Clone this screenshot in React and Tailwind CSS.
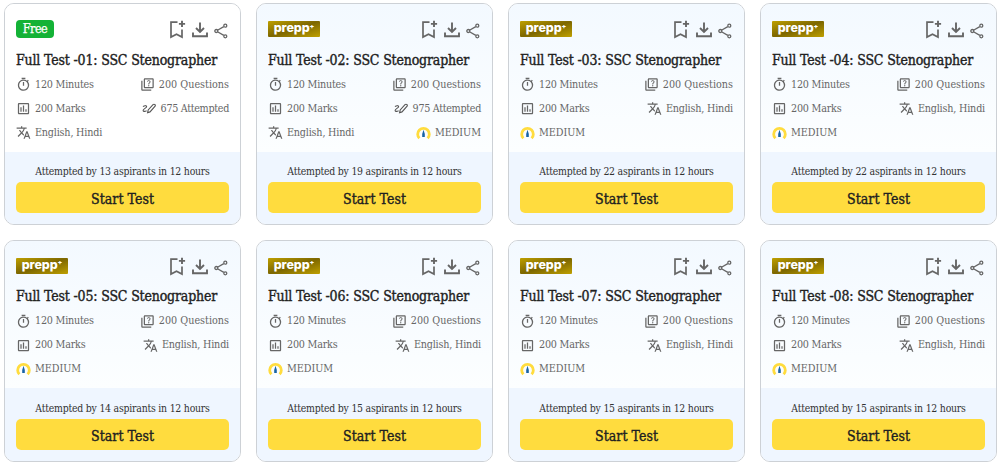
import React from 'react';
import { MdOutlineTimer, MdOutlineQuiz, MdOutlineAssessment, MdTranslate } from 'react-icons/md';

const tests = [
  { id: '01', free: true, attempted: 675, recent: 13 },
  { id: '02', attempted: 975, level: 'MEDIUM', recent: 19 },
  { id: '03', level: 'MEDIUM', recent: 22 },
  { id: '04', level: 'MEDIUM', recent: 22 },
  { id: '05', level: 'MEDIUM', recent: 14 },
  { id: '06', level: 'MEDIUM', recent: 15 },
  { id: '07', level: 'MEDIUM', recent: 15 },
  { id: '08', level: 'MEDIUM', recent: 15 },
];

function BookmarkIcon() {
  return (
    <svg width="17" height="19" viewBox="0 0 17 19" fill="none" stroke="#666" strokeWidth="1.7">
      <path d="M8.5 2.2H2V17L7.5 14.2L13 17V9.5" />
      <path d="M13 .8V7M9.9 3.9H16.1" strokeWidth="1.9" />
    </svg>
  );
}

function DownloadIcon() {
  return (
    <svg width="16" height="16" viewBox="0 0 16 16" fill="none" stroke="#666" strokeWidth="1.9">
      <path d="M8 .5V9.8M4 6L8 10L12 6" />
      <path d="M1 10.5V14.3H15V10.5" />
    </svg>
  );
}

function ShareIcon() {
  return (
    <svg width="14" height="16" viewBox="0 0 14 16" fill="none" stroke="#666" strokeWidth="1.3">
      <path d="M3.5 7.3L9.8 3.6M3.5 8.7L9.8 12.4" />
      <circle cx="2.3" cy="8" r="1.5" />
      <circle cx="11.3" cy="2.7" r="1.5" />
      <circle cx="11.3" cy="13.3" r="1.5" />
    </svg>
  );
}

function AttemptedIcon() {
  return (
    <svg width="14" height="11" viewBox="0 0 14 11" fill="none" stroke="#555" strokeWidth="1.1">
      <path d="M1 3.6C2.2 2.5 4.7 2.2 4.6 3.7C4.5 5.1 .8 5.9 1.1 7.6C1.3 8.8 3.3 8.4 4.6 7.8" />
      <path d="M5.6 9.6L6.2 7L11 1.7Q12 .8 13 1.7Q13.7 2.5 12.9 3.4L8 8.9Z" />
    </svg>
  );
}

function GaugeIcon() {
  return (
    <svg width="15" height="14" viewBox="0 0 15 14" fill="none">
      <path d="M3.4 12.3A5.8 5.8 0 1 1 11.6 12.3" stroke="#ffdc3e" strokeWidth="2.8" />
      <path d="M7.5 3.8L8.8 8V11H6.2V8Z" fill="#1763a6" />
    </svg>
  );
}

function Meta({ icon, children, right, className = 'tracking-[-0.22px]' }) {
  return (
    <div className={right ? 'flex h-6 items-center justify-end gap-1' : 'flex h-6 items-center gap-1'}>
      <span className="flex w-[15px] justify-center text-[#666]">{icon}</span>
      <span className={`text-[10.7px] whitespace-nowrap text-[#666] ${className}`}>{children}</span>
    </div>
  );
}

function TestCard({ test }) {
  return (
    <div className="flex h-[222px] flex-col overflow-hidden rounded-[10px] border border-[#cdd1d6]">
      <div className={test.free ? 'h-[147.4px] bg-white px-[11px] pt-4' : 'h-[147.4px] bg-linear-to-b from-[#f3f9ff] to-[#fcfeff] px-[11px] pt-4'}>
        <div className="flex h-[22px] items-start justify-between">
          {test.free ? (
            <span className="flex h-[18px] w-[38px] items-center justify-center rounded bg-[#14b236] text-[12.5px] tracking-[-0.5px] text-white [-webkit-text-stroke:0.25px]">Free</span>
          ) : (
            <span className="mt-px flex h-4 w-[52px] items-center justify-center rounded-[1px] bg-linear-to-br from-[#bfa000] via-[#7d6700] to-[#bfa000] pb-0.5 font-['Inter',sans-serif] text-[12.5px] leading-none font-extrabold tracking-[-0.1px] text-white">
              prepp<span className="-mt-1 text-[7px]">+</span>
            </span>
          )}
          <div className="flex items-start">
            <BookmarkIcon />
            <span className="mt-[2px] ml-[6px]"><DownloadIcon /></span>
            <span className="mt-[3px] ml-[6px] w-[15px]"><ShareIcon /></span>
          </div>
        </div>
        <h3 className="mt-[5.5px] h-[25px] text-[14px] leading-[25px] tracking-[-0.17px] whitespace-nowrap text-[#212121] [-webkit-text-stroke:0.35px]">
          Full Test -{test.id}: SSC Stenographer
        </h3>
        <div className="grid grid-cols-2">
          <Meta icon={<MdOutlineTimer size={15} />}>120 Minutes</Meta>
          <Meta right icon={<MdOutlineQuiz size={15} />} className="tracking-[0.02px]">200 Questions</Meta>
          <Meta icon={<MdOutlineAssessment size={15} />}>200 Marks</Meta>
          {test.attempted && <Meta right icon={<AttemptedIcon />} className="tracking-[-0.32px]">{test.attempted} Attempted</Meta>}
          <Meta right={!test.attempted} icon={<MdTranslate size={15} />} className="tracking-[-0.18px]">English, Hindi</Meta>
          {test.level && <Meta right={!!test.attempted} icon={<GaugeIcon />} className="tracking-[-0.04px]">{test.level}</Meta>}
        </div>
      </div>
      <div className="flex-1 bg-[#eff6ff] px-[11px] pt-[11.2px]">
        <p className="h-[19px] text-center text-[10.4px] leading-[17px] tracking-[-0.22px] whitespace-nowrap text-[#333]">
          Attempted by {test.recent} aspirants in 12 hours
        </p>
        <button className="flex h-[31px] w-full items-center justify-center rounded-[5px] bg-[#ffdc3e] pt-[4px] text-[14px] tracking-[0.05px] text-[#212121] [-webkit-text-stroke:0.35px]">
          Start Test
        </button>
      </div>
    </div>
  );
}

export default function App() {
  return (
    <main className="grid h-[465px] w-[1001px] grid-cols-[repeat(4,237px)] content-start gap-x-[15px] gap-y-[14.6px] bg-white pt-[3.4px] pl-1 font-['DejaVu_Serif_Condensed','DejaVu_Serif',serif]">
      {tests.map((test) => (
        <TestCard key={test.id} test={test} />
      ))}
    </main>
  );
}
